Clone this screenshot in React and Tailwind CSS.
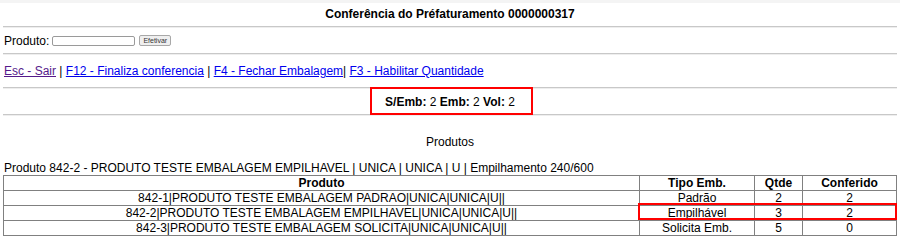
import React from "react";

const rows = [
  { produto: "842-1|PRODUTO TESTE EMBALAGEM PADRAO|UNICA|UNICA|U||", tipo: "Padrão", qtde: "2", conf: "2" },
  { produto: "842-2|PRODUTO TESTE EMBALAGEM EMPILHAVEL|UNICA|UNICA|U||", tipo: "Empilhável", qtde: "3", conf: "2" },
  { produto: "842-3|PRODUTO TESTE EMBALAGEM SOLICITA|UNICA|UNICA|U||", tipo: "Solicita Emb.", qtde: "5", conf: "0" },
];

const Hr = () => <div className="h-[2px] border-t border-[#c8c8c8] border-b border-b-[#eeeeee]"></div>;

export default function App() {
  return (
    <div
      className="relative w-[900px] h-[247px] bg-white text-black text-[12px] overflow-hidden"
      style={{ fontFamily: '"Liberation Sans", Arial, sans-serif' }}
    >
      <div className="h-[3px] bg-[#f4f4f4]"></div>
      <div className="px-[3px]">
        {/* Title */}
        <div className="h-[23px] flex items-center justify-center font-bold pb-[1px]">
          Conferência do Préfaturamento 0000000317
        </div>
        <Hr />

        {/* Produto input */}
        <div className="h-[25px] flex items-center gap-[3px] pl-[1px]">
          <span>Produto:</span>
          <input
            type="text"
            className="w-[83px] h-[10px] border border-[#9a9a9a] rounded-[2px] bg-white"
          />
          <button className="ml-[1px] h-[11px] px-[3px] text-[7px] leading-none border border-[#a8a8a8] rounded-[2px] bg-[#efefef] text-[#333]">
            Efetivar
          </button>
        </div>
        <Hr />

        {/* Links */}
        <div className="h-[32px] flex items-center pl-[1px]">
          <a href="#" className="text-[#551a8b] underline">Esc - Sair</a>
          <span>&nbsp;|&nbsp;</span>
          <a href="#" className="text-[#0000ee] underline">F12 - Finaliza conferencia</a>
          <span>&nbsp;|&nbsp;</span>
          <a href="#" className="text-[#0000ee] underline">F4 - Fechar Embalagem</a>
          <span>|&nbsp;</span>
          <a href="#" className="text-[#0000ee] underline">F3 - Habilitar Quantidade</a>
        </div>
        <Hr />

        {/* Summary */}
        <div className="h-[25px] flex items-center justify-center">
          <b>S/Emb:</b>&nbsp;2&nbsp;<b>Emb:</b>&nbsp;2&nbsp;<b>Vol:</b>&nbsp;2
        </div>
        <Hr />

        {/* Produtos */}
        <div className="h-[35px] flex items-end justify-center mb-[10px]">Produtos</div>
        <div className="h-[14px] leading-[14px] pl-[1px]">
          Produto 842-2 - PRODUTO TESTE EMBALAGEM EMPILHAVEL | UNICA | UNICA | U | Empilhamento 240/600
        </div>

        <table className="w-full border-collapse border border-[#a0a0a0] leading-[14px]">
          <thead>
            <tr>
              <th className="border border-[#808080] font-bold text-center">Produto</th>
              <th className="border border-[#808080] font-bold text-center w-[115px]">Tipo Emb.</th>
              <th className="border border-[#808080] font-bold text-center w-[48px]">Qtde</th>
              <th className="border border-[#808080] font-bold text-center w-[94px]">Conferido</th>
            </tr>
          </thead>
          <tbody>
            {rows.map((r) => (
              <tr key={r.produto}>
                <td className="border border-[#808080] text-center">{r.produto}</td>
                <td className="border border-[#808080] text-center">{r.tipo}</td>
                <td className="border border-[#808080] text-center">{r.qtde}</td>
                <td className="border border-[#808080] text-center">{r.conf}</td>
              </tr>
            ))}
          </tbody>
        </table>
      </div>

      {/* highlight boxes */}
      <div className="absolute left-[370px] top-[87px] w-[163px] h-[28px] border-2 border-[#ff0000] pointer-events-none"></div>
      <div className="absolute left-[638px] top-[203px] w-[259px] h-[17px] border-2 border-[#ff0000] pointer-events-none"></div>
    </div>
  );
}
